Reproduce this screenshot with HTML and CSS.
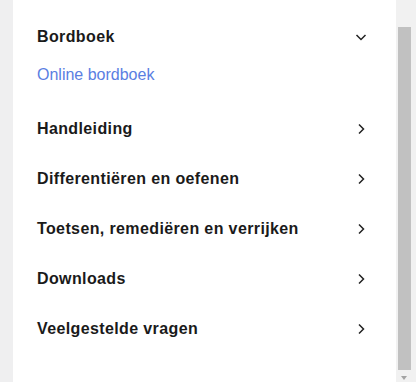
FILE: index.html
```html
<!DOCTYPE html>
<html lang="nl">
<head>
<meta charset="utf-8">
<title>Menu</title>
<link rel="stylesheet" href="styles.css">
</head>
<body>
<div class="frame">
  <div class="gutter"></div>
  <nav class="panel">
    <div class="item open">
      <span class="label">Bordboek</span>
      <svg class="chev" viewBox="0 0 16 16" width="16" height="16"><polyline points="3.5,6 8,10.5 12.5,6" /></svg>
    </div>
    <div class="sub">
      <a class="sublink" href="#">Online bordboek</a>
    </div>
    <div class="item">
      <span class="label">Handleiding</span>
      <svg class="chev" viewBox="0 0 16 16" width="16" height="16"><polyline points="6,3.5 10.5,8 6,12.5" /></svg>
    </div>
    <div class="item">
      <span class="label">Differentiëren en oefenen</span>
      <svg class="chev" viewBox="0 0 16 16" width="16" height="16"><polyline points="6,3.5 10.5,8 6,12.5" /></svg>
    </div>
    <div class="item">
      <span class="label">Toetsen, remediëren en verrijken</span>
      <svg class="chev" viewBox="0 0 16 16" width="16" height="16"><polyline points="6,3.5 10.5,8 6,12.5" /></svg>
    </div>
    <div class="item">
      <span class="label">Downloads</span>
      <svg class="chev" viewBox="0 0 16 16" width="16" height="16"><polyline points="6,3.5 10.5,8 6,12.5" /></svg>
    </div>
    <div class="item">
      <span class="label">Veelgestelde vragen</span>
      <svg class="chev" viewBox="0 0 16 16" width="16" height="16"><polyline points="6,3.5 10.5,8 6,12.5" /></svg>
    </div>
  </nav>
  <div class="scrollbar">
    <div class="thumb"></div>
    <div class="arrow"></div>
  </div>
</div>
</body>
</html>
```
FILE: styles.css
```css
* { box-sizing: border-box; }
html, body { margin: 0; padding: 0; }
body {
  width: 416px;
  height: 382px;
  overflow: hidden;
  font-family: "Liberation Sans", Arial, sans-serif;
  background: #ffffff;
}
.frame {
  display: flex;
  height: 382px;
}
.gutter {
  width: 13px;
  background: #efeff0;
  flex: none;
}
.panel {
  flex: 1;
  background: #ffffff;
  padding: 12px 27px 0 24px;
  display: flex;
  flex-direction: column;
}
.item {
  height: 50px;
  display: flex;
  align-items: center;
  justify-content: space-between;
}
.label {
  font-size: 16px;
  font-weight: bold;
  color: #1a1a1a;
  letter-spacing: 0.38px;
}
.chev {
  flex: none;
  fill: none;
  stroke: #222;
  stroke-width: 1.5;
}
.sub {
  height: 42px;
  padding-top: 3px;
}
.sublink {
  display: block;
  font-size: 16px;
  line-height: 20px;
  color: #5a7ee2;
  text-decoration: none;
}
.scrollbar {
  width: 20px;
  flex: none;
  background: #f1f1f1;
  position: relative;
  padding: 27px 5px 0 2px;
}
.thumb {
  height: 343px;
  background: #c1c1c1;
}
.arrow {
  position: absolute;
  left: 5px;
  top: 376px;
  width: 0;
  height: 0;
  border-left: 3.5px solid transparent;
  border-right: 3.5px solid transparent;
  border-top: 4px solid #a3a3a3;
}
```
